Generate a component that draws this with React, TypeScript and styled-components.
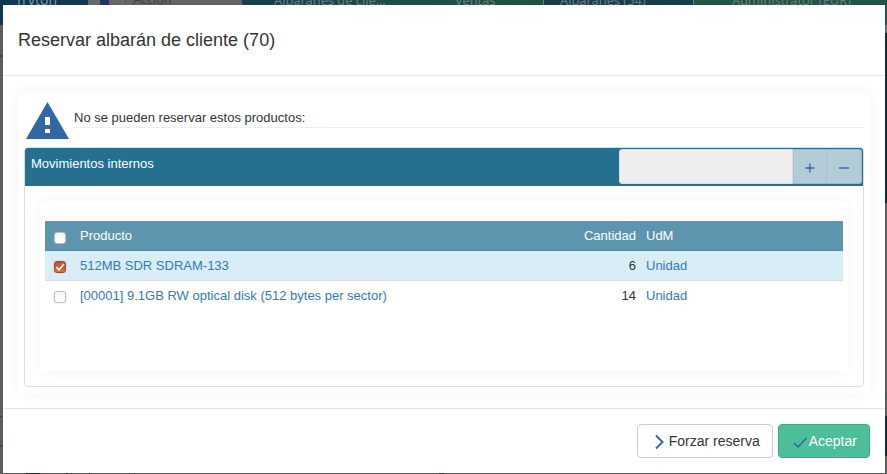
import React from 'react';
import styled, { createGlobalStyle } from 'styled-components';

const GlobalStyle = createGlobalStyle`
  * { box-sizing: border-box; }
  html, body { margin: 0; height: 100%; overflow: hidden; }
  body { font: 13px/20px "Liberation Sans", Arial, sans-serif; color: #333; }
`;

const Page = styled.div`
  position: relative;
  width: 887px;
  height: 474px;
  overflow: hidden;
  background: #5d5d5d;
`;

const TopBar = styled.div`
  display: flex;
  height: 25px;
  font: 13px/18px "Noto Sans", sans-serif;
  color: #6c7c80;
`;

const Tab = styled.div<{ $w: number; $bg: string; $pad?: number; $size?: number; $color?: string; $edge?: boolean }>`
  flex: 0 0 ${p => p.$w}px;
  padding-left: ${p => p.$pad ?? 0}px;
  background: ${p => p.$bg};
  color: ${p => p.$color ?? 'inherit'};
  font-size: ${p => p.$size ?? 12.8}px;
  white-space: nowrap;
  border-left: ${p => (p.$edge ? '1px solid #687a7b' : '0')};
`;

const TabText = styled.span`
  display: block;
  margin-top: -9px;
`;

const Gap = styled.span<{ $w: number }>`
  display: inline-block;
  width: ${p => p.$w}px;
`;

const Backdrop = styled.div`
  display: flex;
  justify-content: space-between;
  height: 448px;
`;

const Rail = styled.div`
  display: flex;
  flex-direction: column;
  width: 2px;
`;

const BottomEdge = styled.div`
  display: flex;
  height: 1px;
`;

const EdgeMark = styled.div<{ $x: number; $w: number; $bg: string }>`
  flex: 0 0 ${p => p.$w}px;
  margin-left: ${p => p.$x}px;
  background: ${p => p.$bg};
`;

const RailBlock = styled.div<{ $h: number; $bg?: string }>`
  flex: 0 0 ${p => p.$h}px;
  background: ${p => p.$bg ?? 'transparent'};
`;

const Dialog = styled.section`
  position: absolute;
  left: 3px;
  top: 5px;
  width: 882px;
  height: 468px;
  display: flex;
  flex-direction: column;
  background: #fff;
`;

const DialogHeader = styled.header`
  flex: 0 0 71px;
  padding: 22px 15px 0;
  border-bottom: 1px solid #e5e5e5;
`;

const Title = styled.h4`
  margin: 0;
  font-size: 18px;
  line-height: 26px;
  font-weight: 400;
`;

const DialogBody = styled.div`
  flex: 1;
  padding: 15px;
`;

const Card = styled.div<{ $h: number }>`
  height: ${p => p.$h}px;
  border-radius: 4px;
  background: #fff;
  box-shadow: 0 0 15px rgba(0, 0, 0, 0.05);
`;

const Message = styled.div`
  display: flex;
  height: 56px;
  padding: 8px 6px 0 6px;
`;

const WarningIcon = styled.svg`
  flex: 0 0 50px;
  width: 50px;
  height: 44px;
`;

const MessageText = styled.div`
  flex: 1;
  height: 29px;
  padding-top: 9px;
  border-bottom: 1px solid #eee;
`;

const Fieldset = styled.div`
  height: 240px;
  margin: 0 6px;
  border: 1px solid #ddd;
  border-radius: 4px;
  overflow: hidden;
`;

const FieldHeader = styled.div`
  display: flex;
  justify-content: space-between;
  height: 38px;
  padding: 1px 1px 0 6px;
  background: #26708f;
  color: #fff;
`;

const FieldTitle = styled.div`
  padding-top: 5px;
`;

const InputGroup = styled.div`
  display: flex;
  width: 243px;
  height: 35px;
`;

const Input = styled.div`
  flex: 1;
  border: 1px solid #dadfe0;
  border-radius: 3px 0 0 3px;
  background: #eee;
`;

const AddonButton = styled.button<{ $last?: boolean }>`
  display: flex;
  justify-content: center;
  align-items: center;
  width: ${p => (p.$last ? 36 : 33)}px;
  padding: 2px 0 0;
  border: 1px solid #9fb9c2;
  border-left-color: #b1bfc4;
  border-right-width: ${p => (p.$last ? 1 : 0)}px;
  border-radius: ${p => (p.$last ? '0 3px 3px 0' : '0')};
  background: #b3ccd8;
`;

const TableArea = styled.div`
  padding: 15px;
`;

const Table = styled.div`
  padding: 20px 5px;
`;

const Row = styled.div<{ $kind?: 'head' | 'selected' }>`
  display: grid;
  grid-template-columns: 30px 1fr 90px 207px;
  height: 30px;
  padding-top: 5px;
  color: ${p => (p.$kind === 'head' ? '#fff' : '#337ab7')};
  background: ${p => (p.$kind === 'head' ? '#5d95af' : p.$kind ? '#d9edf7' : '#fff')};
  border-bottom: ${p => (p.$kind === 'head' ? '1px solid #4c8ba5' : p.$kind ? '1px solid #ddd' : '0')};
`;

const Check = styled.span<{ $on?: boolean; $head?: boolean }>`
  display: flex;
  width: 12px;
  height: 12px;
  margin: ${p => (p.$head ? 6 : 5)}px 0 0 9px;
  border: 1px solid ${p => (p.$on ? '#9d472a' : '#bbb')};
  border-radius: 3px;
  background: ${p => (p.$on ? 'linear-gradient(#c94f23, #e06f43)' : 'linear-gradient(#f3f3f3, #fff)')};
  box-shadow: 0 0 1px ${p => (p.$on ? '#a99' : '#bbb')};
`;

const Cell = styled.span<{ $inset?: boolean }>`
  padding-left: ${p => (p.$inset ? 10 : 5)}px;
`;

const Quantity = styled.span<{ $head?: boolean }>`
  text-align: right;
  color: ${p => (p.$head ? '#fff' : '#333')};
`;

const DialogFooter = styled.footer`
  display: flex;
  flex: 0 0 65px;
  justify-content: flex-end;
  gap: 5px;
  padding: 15px 15px 0;
  border-top: 1px solid #e5e5e5;
`;

const Button = styled.button<{ $primary?: boolean }>`
  display: flex;
  align-items: center;
  width: ${p => (p.$primary ? 92 : 136)}px;
  height: 34px;
  padding: 0 0 0 ${p => (p.$primary ? 14 : 16)}px;
  border: 1px solid ${p => (p.$primary ? '#35aa84' : '#ccc')};
  border-radius: 4px;
  background: ${p => (p.$primary ? '#4dbd9a' : '#fff')};
  color: ${p => (p.$primary ? '#fff' : '#333')};
  font: 14px/20px "Liberation Sans", Arial, sans-serif;
  white-space: nowrap;
`;

const ButtonIcon = styled.svg`
  flex: none;
  margin: 2px 0.7px 0 0;
`;

const rows = [
  { product: '512MB SDR SDRAM-133', quantity: 6, unit: 'Unidad', selected: true },
  { product: '[00001] 9.1GB RW optical disk (512 bytes per sector)', quantity: 14, unit: 'Unidad', selected: false },
];

export default function App() {
  return (
    <Page>
      <GlobalStyle />
      <TopBar>
        <Tab $w={88} $bg="#123850" $pad={15} $size={14} $color="#7d939d"><TabText>Tryton</TabText></Tab>
        <Tab $w={12} $bg="#686868" />
        <Tab $w={9} $bg="#1e3762" />
        <Tab $w={13} $bg="#666" />
        <Tab $w={120} $bg="#646464" $pad={10} $size={12.5} $color="#414141" $edge><TabText>Acción</TabText></Tab>
        <Tab $w={301} $bg="linear-gradient(90deg, #163e4d, #1d4d4a 50%, #21523f)" $pad={32}>
          <TabText>Albaranes de clie...<Gap $w={69} />Ventas</TabText>
        </Tab>
        <Tab $w={150} $bg="#173d4d" $pad={16} $edge><TabText>Albaranes (54)</TabText></Tab>
        <Tab $w={194} $bg="#205546" $pad={38} $edge><TabText>Administrator [EUR]</TabText></Tab>
      </TopBar>
      <Backdrop>
        <Rail>
          <RailBlock $h={30} />
          <RailBlock $h={2} $bg="#2b4468" />
          <RailBlock $h={359} />
          <RailBlock $h={1} $bg="#3a3a3a" />
          <RailBlock $h={28} />
          <RailBlock $h={2} $bg="#2b4468" />
        </Rail>
        <Rail>
          <RailBlock $h={8} $bg="#686868" />
          <RailBlock $h={170} $bg="#0c303f" />
          <RailBlock $h={189} />
          <RailBlock $h={7} $bg="#37665a" />
          <RailBlock $h={17} />
          <RailBlock $h={40} $bg="#0c303f" />
        </Rail>
      </Backdrop>
      <BottomEdge>
        <EdgeMark $x={26} $w={14} $bg="#0f2f40" />
        <EdgeMark $x={26} $w={2} $bg="#333" />
        <EdgeMark $x={3} $w={1} $bg="#333" />
        <EdgeMark $x={17} $w={1} $bg="#222" />
        <EdgeMark $x={39} $w={1} $bg="#333" />
        <EdgeMark $x={4} $w={1} $bg="#333" />
        <EdgeMark $x={304} $w={5} $bg="#5c3324" />
      </BottomEdge>
      <Dialog>
        <DialogHeader><Title>Reservar albarán de cliente (70)</Title></DialogHeader>
        <DialogBody>
          <Card $h={302}>
            <Message>
              <WarningIcon viewBox="0 0 50 44">
                <path fill="#3465a4" fillRule="evenodd" d="M2 40 23.5 3 45 40ZM21 18v8h5v-8ZM21 30v4h5v-4Z" />
              </WarningIcon>
              <MessageText>No se pueden reservar estos productos:</MessageText>
            </Message>
            <Fieldset>
              <FieldHeader>
                <FieldTitle>Movimientos internos</FieldTitle>
                <InputGroup>
                  <Input />
                  <AddonButton aria-label="Añadir">
                    <svg width="10" height="10" viewBox="0 0 10 10"><path d="M.5 5h9M5 .5v9" stroke="#3465a4" strokeWidth="1.3" /></svg>
                  </AddonButton>
                  <AddonButton $last aria-label="Quitar">
                    <svg width="10" height="10" viewBox="0 0 10 10"><path d="M0 5h10" stroke="#3970aa" strokeWidth="1.4" /></svg>
                  </AddonButton>
                </InputGroup>
              </FieldHeader>
              <TableArea>
                <Card $h={170}>
                  <Table>
                    <Row $kind="head">
                      <Check $head />
                      <Cell>Producto</Cell>
                      <Quantity $head>Cantidad</Quantity>
                      <Cell $inset>UdM</Cell>
                    </Row>
                    {rows.map(r => (
                      <Row key={r.product} $kind={r.selected ? 'selected' : undefined}>
                        <Check $on={r.selected}>
                          {r.selected && (
                            <svg width="10" height="10" viewBox="0 0 10 10"><path d="M1.3 5 4 7.8 9 2" fill="none" stroke="#fff" strokeWidth="1.7" /></svg>
                          )}
                        </Check>
                        <Cell>{r.product}</Cell>
                        <Quantity>{r.quantity}</Quantity>
                        <Cell $inset>{r.unit}</Cell>
                      </Row>
                    ))}
                  </Table>
                </Card>
              </TableArea>
            </Fieldset>
          </Card>
        </DialogBody>
        <DialogFooter>
          <Button>
            <ButtonIcon width="14" height="16" viewBox="0 0 14 16"><path d="m2 1.5 6.5 6.5L2 14.5" fill="none" stroke="#3465a4" strokeWidth="2" /></ButtonIcon>
            Forzar reserva
          </Button>
          <Button $primary>
            <ButtonIcon width="15" height="14" viewBox="0 0 15 14"><path d="m1 8 4 4 8.5-9" fill="none" stroke="#3465a4" strokeWidth="1.5" /></ButtonIcon>
            Aceptar
          </Button>
        </DialogFooter>
      </Dialog>
    </Page>
  );
}
